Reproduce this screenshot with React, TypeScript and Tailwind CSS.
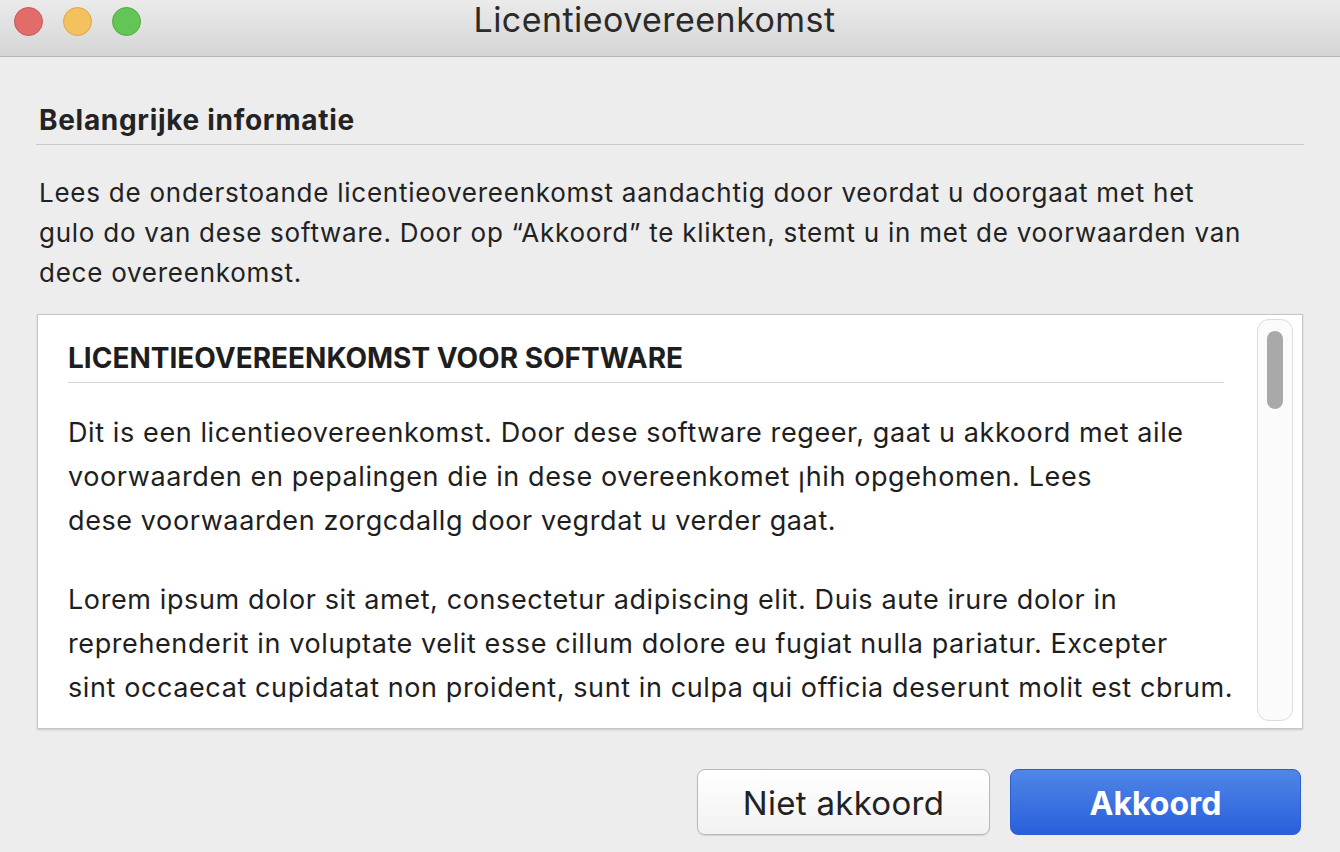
export default function App() {
  const font = { fontFamily: '"Inter", "Liberation Sans", sans-serif' };
  return (
    <main
      className="w-[1340px] h-[852px] overflow-hidden bg-[#ededed] text-[#1e1e1e] flex flex-col"
      style={font}
    >
      {/* Title bar */}
      <header className="relative h-[57px] shrink-0 bg-gradient-to-b from-[#ebebeb] to-[#d5d5d5] border-b border-[#b4b4b4] flex items-center justify-center">
        <div className="absolute left-[14px] top-[7px] flex gap-[20px]">
          <span className="w-[29px] h-[29px] rounded-full bg-[#e26c69] border border-[#c95653]" />
          <span className="w-[29px] h-[29px] rounded-full bg-[#f4c15f] border border-[#dca44a]" />
          <span className="w-[29px] h-[29px] rounded-full bg-[#63c555] border border-[#4fac44]" />
        </div>
        <h1 className="-mt-[16px] -ml-[31px] text-[34px] leading-[40px] tracking-[0.45px] text-[#2a2a2a]">
          Licentieovereenkomst
        </h1>
      </header>

      {/* Content */}
      <div className="px-[36px] pt-[45px]">
        <h2 className="pl-[3px] pb-[5px] text-[28px] leading-[37px] tracking-[0.7px] font-bold text-[#232323] border-b border-[#c9c9c9]">
          Belangrijke informatie
        </h2>
        <p className="mt-[28px] pl-[3px] text-[26px] leading-[40px] tracking-[0.75px] text-[#222] whitespace-nowrap">
          Lees de onderstoande licentieovereenkomst aandachtig door veordat u doorgaat met het
          <br />
          gulo do van dese software. Door op “Akkoord” te klikten, stemt u in met de voorwaarden van
          <br />
          dece overeenkomst.
        </p>

        {/* License box */}
        <div className="relative mt-[21px] mx-[1px] h-[415px] bg-white border border-[#c6c6c6] shadow-[0_1px_2px_rgba(0,0,0,0.15)] pl-[30px] pt-[26px]">
          <div className="w-[1156px]">
            <h3 className="pb-[6px] text-[28px] leading-[35px] font-bold text-[#1e1e1e] border-b border-[#d6d6d6]">
              LICENTIEOVEREENKOMST VOOR SOFTWARE
            </h3>
            <p className="mt-[28px] text-[27px] leading-[44px] tracking-[0.6px] text-[#1e1e1e] whitespace-nowrap">
              Dit is een licentieovereenkomst. Door dese software regeer, gaat u akkoord met aile
              <br />
              voorwaarden en pepalingen die in dese overeenkomet ꞁhih opgehomen. Lees
              <br />
              dese voorwaarden zorgcdallg door vegrdat u verder gaat.
            </p>
            <p className="mt-[35px] text-[27px] leading-[44px] tracking-[0.6px] text-[#1e1e1e] whitespace-nowrap">
              Lorem ipsum dolor sit amet, consectetur adipiscing elit. Duis aute irure dolor in
              <br />
              reprehenderit in voluptate velit esse cillum dolore eu fugiat nulla pariatur. Excepter
              <br />
              sint occaecat cupidatat non proident, sunt in culpa qui officia deserunt molit est cbrum.
            </p>
          </div>

          {/* Scrollbar */}
          <div className="absolute right-[9px] top-[4px] bottom-[7px] w-[36px] rounded-[12px] border border-[#dcdcdc] bg-[#fbfbfb]">
            <div className="ml-[9px] mt-[11px] w-[16px] h-[78px] rounded-full bg-[#a9a9a9]" />
          </div>
        </div>

        {/* Buttons */}
        <div className="mt-[40px] pr-[3px] flex justify-end gap-[20px]">
          <button className="w-[293px] h-[66px] pt-[3px] rounded-[8px] bg-gradient-to-b from-white to-[#f2f2f2] border border-[#b9b9b9] shadow-[0_1px_1px_rgba(0,0,0,0.12)] text-[33px] tracking-[0.3px] text-[#222]">
            Niet akkoord
          </button>
          <button className="w-[291px] h-[66px] pt-[3px] rounded-[8px] bg-gradient-to-b from-[#4f86e6] to-[#2a5fdc] border border-[#2d5ecf] text-[32px] font-bold text-white">
            Akkoord
          </button>
        </div>
      </div>
    </main>
  );
}
